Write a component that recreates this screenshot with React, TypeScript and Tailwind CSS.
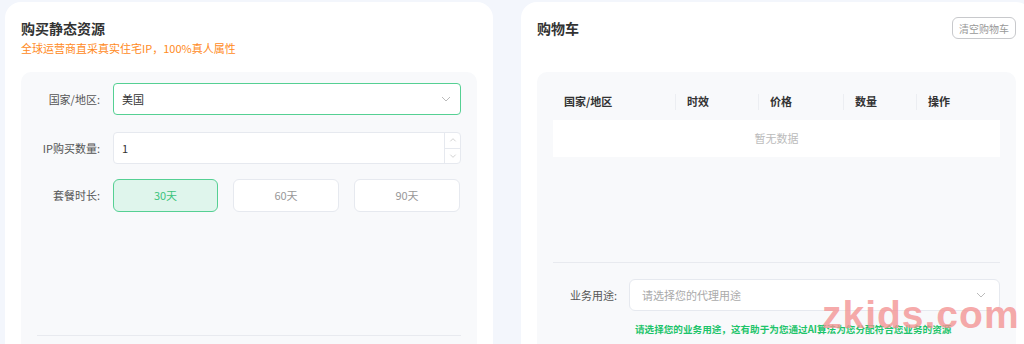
const font = "font-['Noto_Sans_CJK_SC','Noto_Sans',sans-serif]";

function Chevron({ className = "" }: { className?: string }) {
  return (
    <svg viewBox="0 0 12 12" className={className} fill="none" stroke="currentColor" strokeWidth="1">
      <path d="M2 4l4 4 4-4" />
    </svg>
  );
}

function FieldRow({ label, children }: { label: string; children: React.ReactNode }) {
  return (
    <div className="flex items-center">
      <div className="w-[63px] shrink-0 whitespace-nowrap text-right text-[11px] text-[#555]">{label}</div>
      <div className="ml-[13px] flex-1">{children}</div>
    </div>
  );
}

function BuyPanel() {
  const days = ["30天", "60天", "90天"];
  return (
    <section className="h-[400px] w-[488px] shrink-0 rounded-2xl bg-white px-4 pt-[17px]">
      <h2 className="text-[14px] font-bold leading-[18px] text-[#333]">购买静态资源</h2>
      <p className="mt-[4px] text-[11px] leading-[14px] text-[#ff8a1c]">全球运营商直采真实住宅IP，100%真人属性</p>
      <div className="mt-[17px] h-[300px] rounded-[10px] bg-[#f8f9fb] px-4 pt-[11px]">
        <div className="flex flex-col gap-[17px]">
          <FieldRow label="国家/地区:">
            <div className="flex h-8 items-center justify-between rounded-[4px] border border-[#55d093] bg-white pl-2 pr-2">
              <span className="text-[11px] text-[#333]">美国</span>
              <Chevron className="h-3 w-3 text-[#bbb]" />
            </div>
          </FieldRow>
          <FieldRow label="IP购买数量:">
            <div className="flex h-8 items-stretch rounded-[4px] border border-[#e6e9ef] bg-white">
              <span className="flex flex-1 items-center pl-2 text-[11px] text-[#333]">1</span>
              <div className="flex w-[16px] flex-col border-l border-[#e6e9ef] text-[#bbb]">
                <div className="flex flex-1 items-center justify-center border-b border-[#e6e9ef]">
                  <Chevron className="h-2 w-2 rotate-180" />
                </div>
                <div className="flex flex-1 items-center justify-center">
                  <Chevron className="h-2 w-2" />
                </div>
              </div>
            </div>
          </FieldRow>
        </div>
        <div className="mt-[15px] flex items-center">
          <div className="w-[63px] shrink-0 whitespace-nowrap text-right text-[11px] text-[#555]">套餐时长:</div>
          <div className="ml-[13px] flex gap-[15px]">
            {days.map((d, i) => (
              <div
                key={d}
                className={
                  i === 0
                    ? "flex h-[33px] w-[105px] items-center justify-center rounded-[6px] border border-[#55d093] bg-[#dff5ec] text-[11px] text-[#3cc47c]"
                    : "flex h-[33px] w-[106px] items-center justify-center rounded-[6px] border border-[#e6e9ef] bg-white text-[11px] text-[#999]"
                }
              >
                {d}
              </div>
            ))}
          </div>
        </div>
        <div className="mt-[123px] h-px bg-[#e8eaef]" />
      </div>
    </section>
  );
}

function CartPanel() {
  const cols = [
    { name: "国家/地区", w: "w-[122px]" },
    { name: "时效", w: "w-[83px]" },
    { name: "价格", w: "w-[85px]" },
    { name: "数量", w: "w-[73px]" },
    { name: "操作", w: "flex-1" },
  ];
  return (
    <section className="h-[400px] w-[511px] shrink-0 rounded-2xl bg-white pl-4 pr-4 pt-[15px]">
      <div className="flex items-start justify-between">
        <h2 className="mt-[2px] text-[14px] font-bold leading-[18px] text-[#333]">购物车</h2>
        <button className="flex h-[22px] w-[64px] items-center justify-center rounded-[6px] border border-[#c8c9cc] text-[10px] text-[#999]">
          清空购物车
        </button>
      </div>
      <div className="mt-[33px] h-[300px] rounded-[10px] bg-[#f8f9fb] px-4 pt-[11px]">
        <div className="flex h-[37px] items-center">
          {cols.map((c, i) => (
            <div key={c.name} className={`${c.w} flex h-4 items-center ${i > 0 ? "border-l border-[#eceef2]" : ""} pl-[11px] text-[11px] font-bold text-[#333]`}>
              {c.name}
            </div>
          ))}
        </div>
        <div className="flex h-[37px] items-center justify-center bg-white text-[11px] text-[#bbb]">暂无数据</div>
        <div className="mt-[105px] h-px bg-[#e8eaef]" />
        <div className="mt-[16px] flex items-center">
          <div className="w-[64px] shrink-0 whitespace-nowrap text-right text-[11px] text-[#555]">业务用途:</div>
          <div className="ml-[12px] flex h-8 flex-1 items-center justify-between rounded-[6px] border border-[#e6e9ef] bg-white pl-3 pr-3">
            <span className="text-[11px] text-[#aaa]">请选择您的代理用途</span>
            <Chevron className="h-3 w-3 text-[#bbb]" />
          </div>
        </div>
        <p className="ml-[82px] mt-[11px] text-[9.6px] font-bold text-[#1dc46a]">
          请选择您的业务用途，这有助于为您通过AI算法为您分配符合您业务的资源
        </p>
      </div>
    </section>
  );
}

export default function App() {
  return (
    <div className={`relative h-[344px] w-full overflow-hidden bg-[#f3f6fc] ${font}`}>
      <div className="flex gap-[28px] pl-[5px] pt-[2px]">
        <BuyPanel />
        <CartPanel />
      </div>
      <div className="pointer-events-none absolute left-[822px] top-[295px] text-[39px] font-bold leading-none tracking-[1px] text-[#f49393]/80 font-['Liberation_Sans',sans-serif]">
        zkids.com
      </div>
    </div>
  );
}
